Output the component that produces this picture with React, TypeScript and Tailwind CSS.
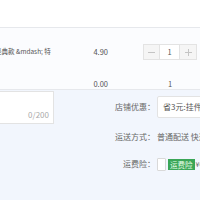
export default function App() {
  return (
    <div
      className="w-[200px] h-[200px] overflow-hidden bg-[#f2f6fd] text-[#333]"
      style={{ fontFamily: '"Noto Sans CJK SC", "Liberation Sans", sans-serif' }}
    >
      {/* header strip */}
      <div className="h-[28px] bg-white border-b border-[#e6e8ec]" />

      {/* item rows */}
      <div className="h-[62px] bg-[#fbfcfe] border-b border-[#e6e8ec]">
        <div className="flex items-center h-[36px] pt-[12px]">
          <div className="w-[66px] shrink-0 overflow-hidden whitespace-nowrap text-[6.5px] text-[#555]">
            <span className="inline-block -ml-[5px]">经典款 &amp;mdash; 特</span>
          </div>
          <div className="w-[42px] shrink-0 text-right text-[7.5px] text-[#555]">4.90</div>
          <div className="ml-[35px] flex h-[16px] shrink-0">
            <button className="w-[17px] h-[16px] border border-[#e3e3e3] bg-[#f5f5f5] flex items-center justify-center">
              <span className="block w-[7px] h-px bg-[#c4c4c4]" />
            </button>
            <div className="w-[19px] h-[16px] border-y border-[#e3e3e3] bg-white flex items-center justify-center text-[7.5px] text-[#555]">
              1
            </div>
            <button className="w-[18px] h-[16px] border border-[#e3e3e3] bg-[#f5f5f5] flex items-center justify-center relative">
              <span className="block w-[7px] h-px bg-[#c4c4c4]" />
              <span className="absolute block w-px h-[7px] bg-[#c4c4c4]" />
            </button>
          </div>
        </div>
        <div className="flex items-center h-[26px] pt-[13px] text-[7.5px] text-[#555]">
          <div className="w-[66px] shrink-0" />
          <div className="w-[42px] shrink-0 text-right">0.00</div>
          <div className="ml-[60px]">1</div>
        </div>
      </div>

      {/* bottom form */}
      <div className="flex pt-[1px]">
        <div className="w-[54px] shrink-0 h-[33px] bg-white border border-[#e3e3e3] border-l-0 flex items-end justify-end pr-[4px] pb-[2px]">
          <span className="text-[8px] text-[#aaa]">0/200</span>
        </div>
        <div className="ml-[49px] flex flex-col text-[8px] whitespace-nowrap">
          <div className="flex items-center h-[22px] mt-[5px]">
            <span className="w-[52px] shrink-0 text-right text-[#666]">店铺优惠：</span>
            <div className="ml-[2px] w-[60px] shrink-0 h-[22px] bg-white border border-[#e3e3e3] rounded-[2px] flex items-center pl-[5px] overflow-hidden text-[#555]">
              省3元:挂件专享
            </div>
          </div>
          <div className="flex items-center h-[16px] mt-[11px]">
            <span className="w-[52px] shrink-0 text-right text-[#666]">运送方式：</span>
            <span className="ml-[2px] text-[#666]">普通配送 快递</span>
          </div>
          <div className="flex items-center h-[16px] mt-[11px]">
            <span className="w-[52px] shrink-0 text-right text-[#666]">运费险：</span>
            <span className="ml-[2px] w-[9px] h-[13px] shrink-0 bg-white border border-[#d9d9d9] rounded-[1px]" />
            <span className="ml-[2px] h-[11px] px-[2px] bg-[#3aa657] text-[#e8ffe8] text-[7.5px] leading-[11px]">运费险</span>
            <span className="ml-[1px] text-[7px] text-[#666]">¥0</span>
          </div>
        </div>
      </div>
    </div>
  );
}
